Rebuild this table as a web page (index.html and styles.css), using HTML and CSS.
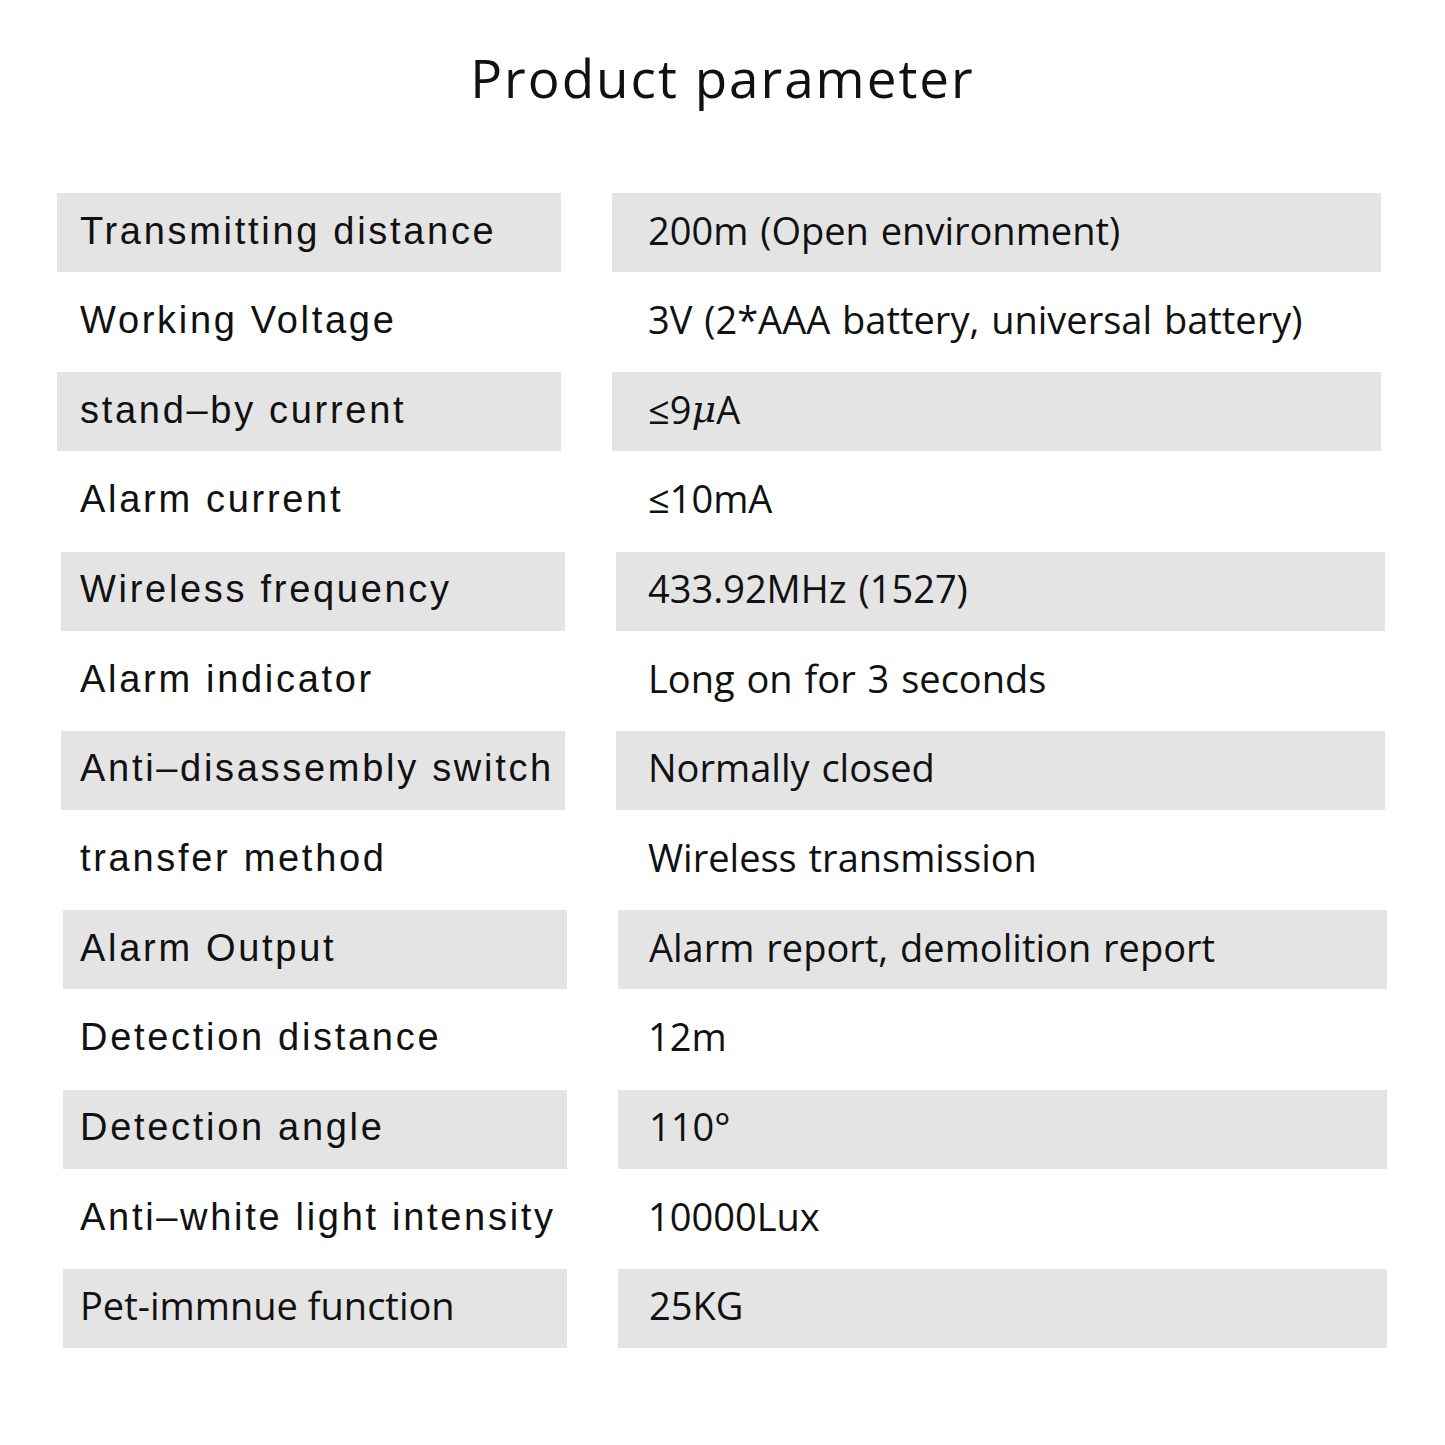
FILE: index.html
```html
<!DOCTYPE html>
<html lang="en">
<head>
<meta charset="utf-8">
<title>Product parameter</title>
<link rel="stylesheet" href="styles.css">
</head>
<body>
<main class="page">
  <h1 class="title">Product parameter</h1>
  <div class="params">
    <div class="row shade"><div class="key">Transmitting distance</div><div class="val">200m (Open environment)</div></div>
    <div class="row"><div class="key">Working Voltage</div><div class="val">3V (2*AAA battery, universal battery)</div></div>
    <div class="row shade"><div class="key">stand–by current</div><div class="val">≤9<i class="mu">μ</i>A</div></div>
    <div class="row"><div class="key">Alarm current</div><div class="val">≤10mA</div></div>
    <div class="row shade mid"><div class="key">Wireless frequency</div><div class="val">433.92MHz (1527)</div></div>
    <div class="row"><div class="key">Alarm indicator</div><div class="val">Long on for 3 seconds</div></div>
    <div class="row shade mid"><div class="key">Anti–disassembly switch</div><div class="val">Normally closed</div></div>
    <div class="row"><div class="key">transfer method</div><div class="val">Wireless transmission</div></div>
    <div class="row shade low"><div class="key">Alarm Output</div><div class="val">Alarm report, demolition report</div></div>
    <div class="row"><div class="key">Detection distance</div><div class="val">12m</div></div>
    <div class="row shade low"><div class="key">Detection angle</div><div class="val">110°</div></div>
    <div class="row"><div class="key">Anti–white light intensity</div><div class="val">10000Lux</div></div>
    <div class="row shade low"><div class="key key-alt">Pet-immnue function</div><div class="val">25KG</div></div>
  </div>
</main>
</body>
</html>
```
FILE: styles.css
```css
html, body {
  margin: 0;
  padding: 0;
  background: #ffffff;
}

.page {
  width: 1445px;
  color: #111111;
}

.title {
  margin: 48px 0 85px 0;
  font-family: "Open Sans", "Noto Sans", sans-serif;
  font-weight: 400;
  font-size: 53px;
  line-height: 60px;
  letter-spacing: 2px;
  text-align: center;
}

.params {
  display: flex;
  flex-direction: column;
  padding-left: 57px;
}

.row {
  display: grid;
  grid-template-columns: 504px 769px;
  column-gap: 51px;
  height: 100.33px;
}

.row.shade {
  height: 79px;
}

.row.mid {
  padding-left: 4px;
}

.row.low {
  padding-left: 6px;
}

.key, .val {
  display: flex;
  align-items: center;
  white-space: nowrap;
}

.key {
  padding-left: 23px;
  padding-bottom: 3px;
  font-family: "Liberation Sans", Arial, sans-serif;
  font-size: 38px;
  letter-spacing: 2.7px;
}

.mid .key { padding-left: 19px; }
.low .key { padding-left: 17px; }

.key-alt {
  letter-spacing: 0;
  font-family: "Open Sans", "Noto Sans", sans-serif;
  font-size: 38px;
  padding-bottom: 6px;
}

.val {
  padding-left: 36px;
  padding-bottom: 6px;
  font-family: "Open Sans", "Noto Sans", sans-serif;
  font-size: 38px;
  word-spacing: 2px;
}

.mid .val { padding-left: 32px; }
.low .val { padding-left: 31px; }

.shade .key, .shade .val {
  background: #e4e4e4;
}

.mu {
  font-family: "DejaVu Serif", "Liberation Serif", serif;
  font-style: italic;
}
```
